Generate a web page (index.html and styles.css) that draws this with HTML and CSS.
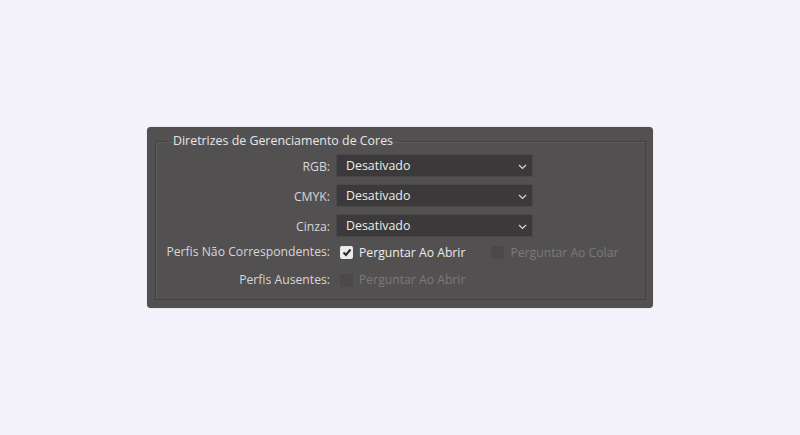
FILE: index.html
```html
<!DOCTYPE html>
<html lang="pt">
<head>
  <meta charset="UTF-8">
  <meta name="viewport" content="width=device-width, initial-scale=1.0">
  <title>Configurações de Cores</title>
  <link rel="stylesheet" href="styles.css">
</head>
<body>
  <div class="panel">
    <fieldset class="group">
      <legend>Diretrizes de Gerenciamento de Cores</legend>

      <div class="grid">
        <label class="label" for="rgb">RGB:</label>
        <div class="select" id="rgb">
          <span>Desativado</span>
          <svg class="chev" width="9" height="6" viewBox="0 0 9 6"><path d="M1 1l3.5 3.5L8 1" fill="none" stroke="#d8d8d8" stroke-width="1.2"/></svg>
        </div>

        <label class="label" for="cmyk">CMYK:</label>
        <div class="select" id="cmyk">
          <span>Desativado</span>
          <svg class="chev" width="9" height="6" viewBox="0 0 9 6"><path d="M1 1l3.5 3.5L8 1" fill="none" stroke="#d8d8d8" stroke-width="1.2"/></svg>
        </div>

        <label class="label" for="gray">Cinza:</label>
        <div class="select" id="gray">
          <span>Desativado</span>
          <svg class="chev" width="9" height="6" viewBox="0 0 9 6"><path d="M1 1l3.5 3.5L8 1" fill="none" stroke="#d8d8d8" stroke-width="1.2"/></svg>
        </div>

        <span class="label check-label">Perfis Não Correspondentes:</span>
        <div class="checks">
          <span class="check">
            <span class="box on">
              <svg width="10" height="9" viewBox="0 0 10 9"><path d="M1.5 4.5l2.5 2.5L8.5 1.5" fill="none" stroke="#2b2b2b" stroke-width="2"/></svg>
            </span>
            Perguntar Ao Abrir
          </span>
          <span class="check disabled">
            <span class="box"></span>
            Perguntar Ao Colar
          </span>
        </div>

        <span class="label check-label last">Perfis Ausentes:</span>
        <div class="checks last">
          <span class="check disabled">
            <span class="box"></span>
            Perguntar Ao Abrir
          </span>
        </div>
      </div>
    </fieldset>
  </div>
</body>
</html>
```

FILE: styles.css
```css
body {
  font-family: 'Open Sans', 'Noto Sans', sans-serif;
  background-color: #f4f2fb; /* Lavender page background */
  margin: 0;
  height: 435px;
  display: flex;
  align-items: center;
  justify-content: center;
}

.panel {
  width: 491px;
  background-color: #535052;
  border-radius: 4px;
  padding: 8px 7px 8px 8px;
  box-shadow: 0 0 1px rgba(0, 0, 0, 0.4);
}

.group {
  margin: 0;
  padding: 4px 0 7px 0;
  border: 1px solid #434142;
  box-shadow: 1px 1px 0 #5e5b5d inset;
}

.group legend {
  margin-left: 12px;
  padding: 0 5px;
  color: #e6e6e6;
  font-size: 12.4px;
  line-height: 12px;
}

.grid {
  display: grid;
  grid-template-columns: 174px 1fr;
  column-gap: 6px;
  align-items: center;
}

.label {
  justify-self: end;
  color: #d6d6d6;
  font-size: 12.2px;
}

.select {
  box-sizing: border-box;
  width: 197px;
  height: 23px;
  margin: 3px 0 4px 0;
  background-color: #3b393a;
  border: 1px solid #4a4849;
  border-radius: 2px;
  display: flex;
  align-items: center;
  justify-content: space-between;
  padding: 0 5px 0 9px;
  color: #ececec;
  font-size: 12.4px;
}

.chev {
  margin-top: 2px;
}

.check-label {
  height: 22px;
  line-height: 22px;
}

.checks {
  display: flex;
  gap: 26px;
  padding-left: 4px;
  white-space: nowrap;
}

.last {
  margin-top: 5px;
  height: 24px;
  line-height: 24px;
}

.check {
  display: flex;
  align-items: center;
  gap: 6px;
  color: #ececec;
  font-size: 12.2px;
}

.check.disabled {
  color: #7c797b;
}

.box {
  width: 13px;
  height: 13px;
  border-radius: 2px;
  background-color: #4b494a;
  display: flex;
  align-items: center;
  justify-content: center;
}

.box.on {
  background-color: #ececec;
}
```
